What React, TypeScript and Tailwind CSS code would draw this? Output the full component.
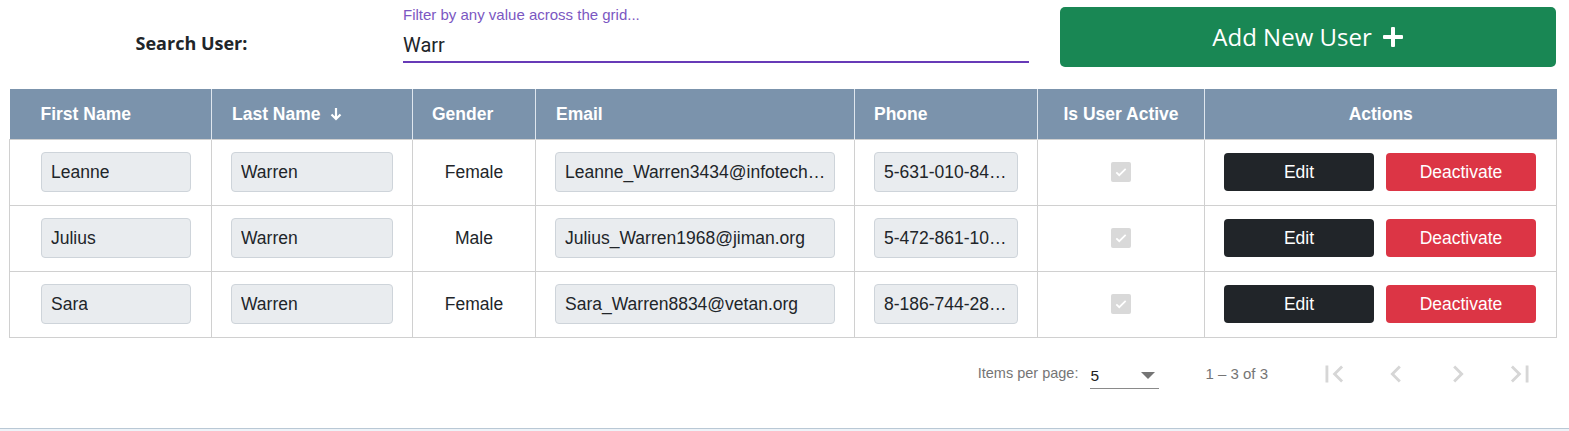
import { useState } from "react";

type User = {
  first: string;
  last: string;
  gender: string;
  email: string;
  phone: string;
};

const users: User[] = [
  { first: "Leanne", last: "Warren", gender: "Female", email: "Leanne_Warren3434@infotech.com", phone: "5-631-010-8439" },
  { first: "Julius", last: "Warren", gender: "Male", email: "Julius_Warren1968@jiman.org", phone: "5-472-861-1055" },
  { first: "Sara", last: "Warren", gender: "Female", email: "Sara_Warren8834@vetan.org", phone: "8-186-744-2871" },
];

function Field({ value, tight }: { value: string; tight?: boolean }) {
  return (
    <div
      className={
        tight
          ? "h-[40px] rounded-[4px] border border-[#ced4da] bg-[#e9ecef] pl-[9px] pr-[6px] flex items-center text-[17.5px] text-[#212529] min-w-0"
          : "h-[40px] rounded-[4px] border border-[#ced4da] bg-[#e9ecef] px-[9px] flex items-center text-[17.5px] text-[#212529] min-w-0"
      }
    >
      <span className="truncate">{value}</span>
    </div>
  );
}

function Check() {
  return (
    <div className="mx-auto h-[20px] w-[20px] rounded-[2px] bg-[#d9d9d9] flex items-center justify-center">
      <svg width="14" height="14" viewBox="0 0 24 24" fill="none" stroke="white" strokeWidth="3">
        <path d="M4 12.5l5 5L20 6.5" />
      </svg>
    </div>
  );
}

function PageIcon({ d }: { d: string }) {
  return (
    <div className="w-[62px] flex justify-center">
      <svg width="34" height="34" viewBox="0 0 24 24" fill="#d6d6d6">
        <path d={d} />
      </svg>
    </div>
  );
}

export default function App() {
  const [search, setSearch] = useState("Warr");

  return (
    <div className="w-[1569px] h-[431px] bg-[#eef3f8] font-['Liberation_Sans',Arial,sans-serif] overflow-hidden">
      <div className="h-[429px] bg-white border-b border-[#b9c8d5]">
        <div className="flex items-start h-[89px]">
          <div className="w-[383px] pt-[30px] text-center text-[18px] font-bold text-[#212529] font-['Open_Sans',sans-serif]">
            Search User:
          </div>
          <div className="ml-[20px] w-[626px] pt-[6px]">
            <div className="text-[15px] text-[#7b57c2] leading-[18px]">Filter by any value across the grid...</div>
            <input
              value={search}
              onChange={(e) => setSearch(e.target.value)}
              className="mt-[7px] w-full h-[32px] text-[20px] text-[#212529] font-['Roboto',sans-serif] outline-none border-b-[2px] border-[#673ab7] pb-[2px]"
            />
          </div>
          <button className="ml-[31px] mt-[7px] w-[496px] h-[60px] rounded-[5px] bg-[#198754] text-white text-[24px] font-['Open_Sans',sans-serif] flex items-center justify-center gap-[10px]">
            Add New User
            <svg width="22" height="22" viewBox="0 0 22 22" fill="white">
              <rect x="9" y="1" width="4" height="20" rx="1" />
              <rect x="1" y="9" width="20" height="4" rx="1" />
            </svg>
          </button>
        </div>

        <table className="ml-[9px] w-[1547px] table-fixed border-collapse text-[17.5px]">
          <colgroup>
            <col className="w-[202px]" />
            <col className="w-[201px]" />
            <col className="w-[123px]" />
            <col className="w-[319px]" />
            <col className="w-[183px]" />
            <col className="w-[167px]" />
            <col className="w-[352px]" />
          </colgroup>
          <thead>
            <tr className="h-[50px] bg-[#7b93ac] text-white font-bold text-left">
              <th className="pl-[31px] border-r border-[#dfe6ee]">First Name</th>
              <th className="pl-[20px] border-r border-[#dfe6ee]">
                <span className="inline-flex items-center gap-[8px]">
                  Last Name
                  <svg width="14" height="16" viewBox="0 0 14 16" fill="none" stroke="white" strokeWidth="2.2">
                    <path d="M7 2v11M2.5 8.5L7 13l4.5-4.5" />
                  </svg>
                </span>
              </th>
              <th className="pl-[19px] border-r border-[#dfe6ee]">Gender</th>
              <th className="pl-[20px] border-r border-[#dfe6ee]">Email</th>
              <th className="pl-[19px] border-r border-[#dfe6ee]">Phone</th>
              <th className="text-center border-r border-[#dfe6ee]">Is User Active</th>
              <th className="text-center">Actions</th>
            </tr>
          </thead>
          <tbody>
            {users.map((u) => (
              <tr key={u.email} className="h-[66px] border border-[#d0d0d0]">
                <td className="pl-[31px] pr-[20px] border border-[#d0d0d0]">
                  <Field value={u.first} />
                </td>
                <td className="px-[19px] border border-[#d0d0d0]">
                  <Field value={u.last} />
                </td>
                <td className="text-center text-[#212529] border border-[#d0d0d0]">{u.gender}</td>
                <td className="px-[19px] border border-[#d0d0d0]">
                  <Field value={u.email} tight />
                </td>
                <td className="px-[19px] border border-[#d0d0d0]">
                  <Field value={u.phone} />
                </td>
                <td className="border border-[#d0d0d0]">
                  <Check />
                </td>
                <td className="px-[19px] border border-[#d0d0d0]">
                  <div className="flex gap-[12px]">
                    <button className="w-[150px] h-[38px] rounded-[4px] bg-[#212529] text-white text-[17.5px]">Edit</button>
                    <button className="w-[150px] h-[38px] rounded-[4px] bg-[#dc3545] text-white text-[17.5px]">Deactivate</button>
                  </div>
                </td>
              </tr>
            ))}
          </tbody>
        </table>

        <div className="flex items-center justify-end pr-[18px] mt-[20px] h-[33px] text-[14.5px] text-[#757575]">
          <span>Items per page:</span>
          <div className="ml-[12px] w-[69px] h-[30px] border-b border-[#8a8a8a] flex items-center justify-between pt-[4px]">
            <span className="text-[15.5px] text-[#212121]">5</span>
            <svg width="14" height="8" viewBox="0 0 14 8" fill="#757575" className="mr-[4px]">
              <path d="M0 0h14L7 7z" />
            </svg>
          </div>
          <span className="ml-[46px] mr-[35px] text-[15px]">1 – 3 of 3</span>
          <PageIcon d="M18.41 16.59L13.82 12l4.59-4.59L17 6l-6 6 6 6zM6 6h2v12H6z" />
          <PageIcon d="M15.41 7.41L14 6l-6 6 6 6 1.41-1.41L10.83 12z" />
          <PageIcon d="M10 6L8.59 7.41 13.17 12l-4.58 4.59L10 18l6-6z" />
          <PageIcon d="M5.59 7.41L10.18 12l-4.59 4.59L7 18l6-6-6-6zM16 6h2v12h-2z" />
        </div>
      </div>
    </div>
  );
}
